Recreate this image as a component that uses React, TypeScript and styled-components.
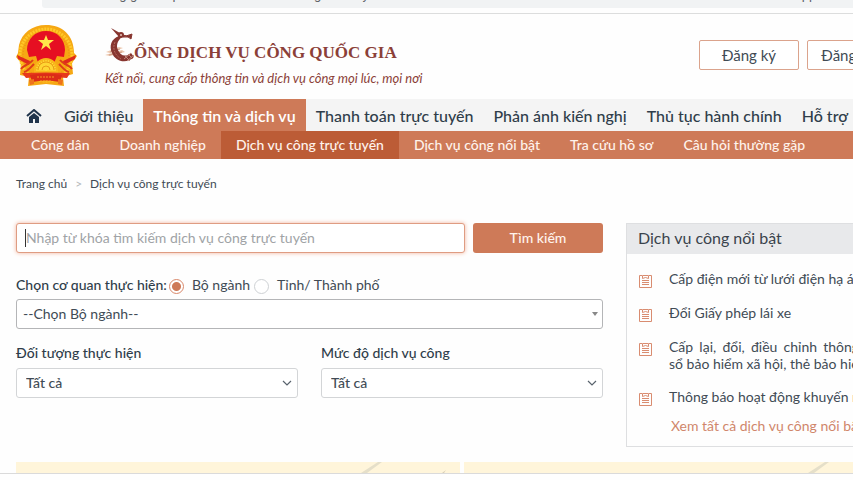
import React, { useState } from 'react';
import styled, { createGlobalStyle, css } from 'styled-components';

const GlobalStyle = createGlobalStyle`
  *, *::before, *::after { box-sizing: border-box; }
  body {
    margin: 0;
    background: #fefefe;
    color: #414b55;
    font-family: Lato, "Noto Sans", sans-serif;
    font-size: 14px;
    line-height: 18px;
  }
  button, input, select { font: inherit; color: inherit; }
  a { color: inherit; text-decoration: none; }
`;

const accent = '#ce7a58';

const Page = styled.div`
  overflow: hidden;
`;

const AddressStrip = styled.div`
  display: flex;
  height: 14px;
  padding: 0 0 5px 42px;
  border-bottom: 1px solid #dcdddd;
`;

const AddressBar = styled.div`
  display: flex;
  flex: 1;
  align-items: flex-end;
  justify-content: space-between;
  height: 8px;
  padding: 0 8px 6px 18px;
  overflow: hidden;
  background: #f1f3f4;
  border-radius: 0 0 0 3px;
  color: #5f6368;
  font-family: Roboto, sans-serif;
  font-size: 13px;
  line-height: 15px;
  white-space: nowrap;
`;

const Container = styled.div`
  min-width: 923px;
  padding: 0 16px;
`;

const Header = styled(Container)`
  display: flex;
  align-items: flex-start;
  height: 85px;
  padding-top: 11px;
`;

const Brand = styled.div`
  flex: 1;
  margin-left: 27px;
  color: #8b3f38;
`;

const BrandTitle = styled.h1`
  display: flex;
  align-items: flex-end;
  height: 40px;
  margin: 0;
  font-family: "Liberation Serif", serif;
  font-size: 17px;
  font-weight: 700;
  line-height: 24px;
  white-space: nowrap;
`;

const Slogan = styled.p`
  margin: 4px 0 0;
  font-size: 13px;
  font-style: italic;
`;

const HeaderActions = styled.div`
  display: flex;
  gap: 8px;
  margin-top: 15px;
`;

const OutlineButton = styled.button`
  width: 100px;
  height: 30px;
  padding: 0;
  background: #fff;
  border: 1px solid #dba38c;
  border-radius: 2px;
  font-size: 15px;
`;

const MainNav = styled.nav`
  background: #f4f4f4;
`;

const MainNavRow = styled(Container)`
  display: flex;
  height: 32px;
  white-space: nowrap;
`;

const navItem = css`
  display: flex;
  align-items: center;
  padding: 2px 10px 0;
`;

const NavLink = styled.a<{ $active?: boolean }>`
  ${navItem}
  color: ${p => (p.$active ? '#fff' : '#2f3d4a')};
  background: ${p => (p.$active ? accent : 'transparent')};
  font-size: 16px;
  font-weight: ${p => (p.$active ? 600 : 500)};
`;

const HomeLink = styled.a`
  ${navItem}
  margin-right: 2px;
`;

const SubNav = styled.nav`
  background: ${accent};
`;

const SubNavRow = styled(Container)`
  display: flex;
  height: 28px;
  white-space: nowrap;
`;

const SubLink = styled.a<{ $active?: boolean }>`
  display: flex;
  align-items: center;
  padding: 0 15px;
  color: #fff3ec;
  background: ${p => (p.$active ? '#bc5c36' : 'transparent')};
  font-weight: 500;
`;

const Breadcrumb = styled.nav`
  display: flex;
  gap: 8px;
  height: 64px;
  padding: 16px 16px 0;
  font-size: 12px;
`;

const Separator = styled.span`
  color: #b5b8bb;
`;

const Content = styled(Container)`
  display: grid;
  grid-template-columns: minmax(0, 1fr) 300px;
  column-gap: 23px;
  align-items: start;
  min-width: 942px;
`;

const SearchForm = styled.form`
  display: flex;
  flex-direction: column;
`;

const SearchRow = styled.div`
  display: flex;
  gap: 8px;
`;

const SearchField = styled.div`
  position: relative;
  flex: 1;
  &::before {
    content: '';
    position: absolute;
    left: 9px;
    top: 6px;
    width: 1px;
    height: 18px;
    background: #333;
  }
`;

const SearchInput = styled.input`
  display: block;
  width: 100%;
  height: 30px;
  padding: 0 9px 2px;
  background: #fff;
  border: 1px solid #df9c82;
  border-radius: 3px;
  box-shadow: 0 0 4px #f3b59d;
  outline: none;
  &::placeholder { color: #a0a3a6; opacity: 1; }
`;

const SearchButton = styled.button`
  width: 130px;
  height: 30px;
  padding: 0;
  background: ${accent};
  border: 0;
  border-radius: 3px;
  color: #fff3ec;
  font-weight: 500;
`;

const AgencyGroup = styled.fieldset`
  display: flex;
  align-items: center;
  height: 18px;
  margin: 23px 0 5px;
  padding: 0;
  border: 0;
`;

const GroupLabel = styled.span`
  margin-right: 2px;
  font-weight: 500;
  color: #2f3d4a;
`;

const RadioLabel = styled.label`
  display: flex;
  align-items: center;
  gap: 8px;
  margin-right: 4px;
`;

const Radio = styled.input`
  appearance: none;
  width: 15px;
  height: 15px;
  margin: 2px 0 0;
  background: #fff;
  border: 1px solid #ced1d4;
  border-radius: 50%;
  &:checked {
    border-color: #d9886a;
    background: radial-gradient(circle, ${accent} 0 4px, #fff 5px);
  }
`;

const SelectBox = styled.div`
  position: relative;
`;

const Select = styled.select<{ $strong?: boolean }>`
  display: block;
  appearance: none;
  width: 100%;
  height: 30px;
  padding: ${p => (p.$strong ? '0 24px 0 6px' : '0 24px 0 9px')};
  background: #fff;
  border: 1px solid ${p => (p.$strong ? '#b4b5b7' : '#d3d5d7')};
  border-radius: 3px;
  font-weight: ${p => (p.$strong ? 400 : 500)};
`;

const SelectMark = styled.svg`
  position: absolute;
  right: 4px;
  top: 10px;
  width: 14px;
  height: 10px;
  pointer-events: none;
`;

const Filters = styled.div`
  display: grid;
  grid-template-columns: 1fr 1fr;
  column-gap: 23px;
  margin-top: 15px;
`;

const FieldLabel = styled.label`
  display: block;
  margin-bottom: 6px;
  color: #2f3d4a;
  font-weight: 500;
`;

const Panel = styled.aside`
  border: 1px solid #dedfe1;
`;

const PanelTitle = styled.h2`
  margin: 0;
  padding: 5px 11px 7px;
  background: #e8e9eb;
  color: #3a434c;
  font-size: 16px;
  font-weight: 400;
`;

const ServiceList = styled.ul`
  margin: 0;
  padding: 16px 12px 0;
  list-style: none;
`;

const ServiceItem = styled.li`
  display: flex;
  align-items: flex-start;
  gap: 17px;
  margin-bottom: 16px;
  text-align: justify;
  line-height: 17px;
`;

const ServiceIcon = styled.svg`
  flex: none;
  width: 13px;
  height: 14px;
  margin-top: 4px;
`;

const MoreLink = styled.a`
  display: block;
  margin: -5px 0 11px 44px;
  color: #d0866b;
  white-space: nowrap;
`;

const Banners = styled(Container)`
  display: grid;
  grid-template-columns: 1fr 1fr;
  gap: 4px;
  margin-top: 15px;
`;

const Banner = styled.div`
  display: flex;
  justify-content: flex-end;
  height: 11px;
  background: #fff5da;
`;

const StatusBar = styled.footer`
  height: 7px;
  border-top: 1px solid #dadada;
  background: #fefefe;
`;

function wheelRays() {
  return Array.from({ length: 13 }, (_, i) => {
    const a = Math.PI + (Math.PI * i) / 12;
    return `M30 45 L${30 + 10 * Math.cos(a)} ${45 + 10 * Math.sin(a)}`;
  }).join(' ');
}

function Emblem() {
  return (
    <svg width="62" height="62" viewBox="0 0 62 62" role="img" aria-label="Quốc huy Việt Nam">
      <path d="M30 0C16 0 6 8 3 20L2 28 0 32 5 38 4 50 13 52 12 61 30 59 48 61 47 52 57 49 56 38 61 31 58 28C58 10 46 0 30 0Z" fill="#f6a813" />
      <circle cx="30" cy="30" r="26" fill="none" stroke="#ffc928" strokeWidth="3" strokeDasharray="2 1" />
      <circle cx="30" cy="30" r="23" fill="none" stroke="#e98a12" strokeWidth="1" strokeDasharray="1 2" />
      <path d="M30 6C19 6 11 14 11 25L13 32 20 31 22 38 38 38 41 31 48 32 49 25C49 14 41 6 30 6Z" fill="#e60f22" />
      <path d="M30 10l2 5h6l-5 4 2 6-5-4-5 4 2-6-5-4h6z" fill="#ffe94a" />
      <path d="M1 30l13 6-1 4L2 34zM60 30l-13 6 1 4 11-6z" fill="#e02a1d" />
      <path d="M5 44c4-5 8-4 12-9M8 47c4-1 7-5 10-8M56 44c-4-5-8-4-12-9M53 47c-4-1-7-5-10-8" fill="none" stroke="#de3c18" strokeWidth="2" />
      <path d="M18 45a12 12 0 0 1 24 0v5H18z" fill="#f9b51a" />
      <path d={wheelRays()} stroke="#ffdf3d" strokeWidth="1" />
      <path d="M22 45a8 8 0 0 1 16 0M26 45a4 4 0 0 1 8 0" fill="#ffd633" stroke="#e99b16" strokeWidth="1" />
      <path d="M6 48Q30 47 54 48L51 53Q30 51 10 53Z" fill="#e7391b" />
      <path d="M14 50Q30 47 46 50L44 57Q30 54 16 57Z" fill="#dc2b18" />
      <path d="M21 52h18M24 56h12" stroke="#f79b20" strokeWidth="1" strokeDasharray="2 1" />
      <path d="M13 55l5-1v5l-4 1zM47 55l-5-1v5l4 1z" fill="#ee721b" />
    </svg>
  );
}

function BirdMark() {
  return (
    <svg width="29" height="38" viewBox="0 0 29 38" aria-hidden="true">
      <path d="M1 25l13-5 4 1-13 5zM0 28l17-5 3 2-15 4z" fill="#ecc7ae" />
      <path d="M5 25l10-3M4 28l13-3" stroke="#cf9a82" fill="none" />
      <path d="M6 1l9 5 3 3-4 1z" fill="#87352f" />
      <path d="M16 8q6 2 11-1l-1 5q-2-3-8-2" fill="#87352f" stroke="#87352f" />
      <path d="M14 9C6 12 4 19 7 26c3 8 14 12 22 4l-3-4c-6 5-11 2-13-3-2-4-1-9 4-13z" fill="#87352f" />
      <path d="M10 15c-3 7 0 13 6 17" fill="none" stroke="#b5685c" strokeDasharray="2 1" />
      <circle cx="16" cy="8" r="3" fill="#87352f" />
      <circle cx="16" cy="8" r="1" fill="#e7c6bd" />
      <path d="M19 32l7-6M22 34l7-6M20 29l5 5M23 27l5 5" stroke="#c0877b" />
    </svg>
  );
}

function HomeIcon() {
  return (
    <svg width="16" height="14" viewBox="0 0 16 14" role="img" aria-label="Trang chủ">
      <path d="M1 7l7-6 7 6" fill="none" stroke="#20344b" strokeWidth="2" />
      <path d="M3 8l5-4 5 4v6H9v-4H7v4H3z" fill="#20344b" />
    </svg>
  );
}

function ClipboardIcon() {
  return (
    <ServiceIcon viewBox="0 0 13 14" fill="none" stroke="#d98c70" aria-hidden="true">
      <path d="M3 1.500H.5v12h12v-12H10" />
      <path d="M3.500 4.500v-3h6v3l-3-1z" />
      <path d="M3 6.500h7M3 8.500h7M3 10.500h7" />
    </ServiceIcon>
  );
}

function Chevron() {
  return (
    <SelectMark viewBox="0 0 14 10" aria-hidden="true">
      <path d="M3 3l4 4 4-4" fill="none" stroke="#59636d" strokeWidth="1.200" />
    </SelectMark>
  );
}

function BannerStroke() {
  return (
    <svg width="100" height="11" viewBox="0 0 100 11" aria-hidden="true">
      <path d="M1 11L18 0h4L7 11z" fill="#e5dfc9" />
      <path d="M82 11l4-3-2 3z" fill="#d8cfb9" />
    </svg>
  );
}

const menu = ['Giới thiệu', 'Thông tin và dịch vụ', 'Thanh toán trực tuyến', 'Phản ánh kiến nghị', 'Thủ tục hành chính', 'Hỗ trợ'];
const submenu = ['Công dân', 'Doanh nghiệp', 'Dịch vụ công trực tuyến', 'Dịch vụ công nổi bật', 'Tra cứu hồ sơ', 'Câu hỏi thường gặp'];
const services = [
  'Cấp điện mới từ lưới điện hạ áp',
  'Đổi Giấy phép lái xe',
  'Cấp lại, đổi, điều chỉnh thông tin trên sổ\u00a0bảo hiểm xã hội, thẻ bảo hiểm y tế',
  'Thông báo hoạt động khuyến mại',
];

export default function App() {
  const [agency, setAgency] = useState('ministry');
  return (
    <Page>
      <GlobalStyle />
      <AddressStrip>
        <AddressBar>
          <span>dichvucong.gov.vn/p/home/dvc-dich-vu-cong-truc-tuyen.html</span>
          <span>Apps bar</span>
        </AddressBar>
      </AddressStrip>
      <Header as="header">
        <Emblem />
        <Brand>
          <BrandTitle aria-label="Cổng Dịch vụ công Quốc gia">
            <BirdMark />
            ỔNG DỊCH VỤ CÔNG QUỐC GIA
          </BrandTitle>
          <Slogan>Kết nối, cung cấp thông tin và dịch vụ công mọi lúc, mọi nơi</Slogan>
        </Brand>
        <HeaderActions>
          <OutlineButton type="button">Đăng ký</OutlineButton>
          <OutlineButton type="button">Đăng nhập</OutlineButton>
        </HeaderActions>
      </Header>
      <MainNav>
        <MainNavRow>
          <HomeLink href="#home"><HomeIcon /></HomeLink>
          {menu.map((label, i) => (
            <NavLink key={label} href={`#menu-${i}`} $active={i === 1}>{label}</NavLink>
          ))}
        </MainNavRow>
      </MainNav>
      <SubNav>
        <SubNavRow>
          {submenu.map((label, i) => (
            <SubLink key={label} href={`#sub-${i}`} $active={i === 2}>{label}</SubLink>
          ))}
        </SubNavRow>
      </SubNav>
      <Breadcrumb aria-label="Đường dẫn">
        <a href="#home">Trang chủ</a>
        <Separator>&gt;</Separator>
        <span>Dịch vụ công trực tuyến</span>
      </Breadcrumb>
      <Content as="main">
        <SearchForm onSubmit={e => e.preventDefault()}>
          <SearchRow>
            <SearchField>
              <SearchInput type="text" aria-label="Từ khóa" placeholder="Nhập từ khóa tìm kiếm dịch vụ công trực tuyến" />
            </SearchField>
            <SearchButton type="submit">Tìm kiếm</SearchButton>
          </SearchRow>
          <AgencyGroup aria-label="Chọn cơ quan thực hiện">
            <GroupLabel>Chọn cơ quan thực hiện:</GroupLabel>
            <RadioLabel>
              <Radio type="radio" name="agency" checked={agency === 'ministry'} onChange={() => setAgency('ministry')} />
              Bộ ngành
            </RadioLabel>
            <RadioLabel>
              <Radio type="radio" name="agency" checked={agency === 'province'} onChange={() => setAgency('province')} />
              Tỉnh/ Thành phố
            </RadioLabel>
          </AgencyGroup>
          <SelectBox>
            <Select $strong aria-label="Chọn Bộ ngành">
              <option>--Chọn Bộ ngành--</option>
            </Select>
            <SelectMark viewBox="0 0 14 10" aria-hidden="true">
              <path d="M7 3h6l-3 4z" fill="#888" />
            </SelectMark>
          </SelectBox>
          <Filters>
            <div>
              <FieldLabel htmlFor="audience">Đối tượng thực hiện</FieldLabel>
              <SelectBox>
                <Select id="audience"><option>Tất cả</option></Select>
                <Chevron />
              </SelectBox>
            </div>
            <div>
              <FieldLabel htmlFor="level">Mức độ dịch vụ công</FieldLabel>
              <SelectBox>
                <Select id="level"><option>Tất cả</option></Select>
                <Chevron />
              </SelectBox>
            </div>
          </Filters>
        </SearchForm>
        <Panel>
          <PanelTitle>Dịch vụ công nổi bật</PanelTitle>
          <ServiceList>
            {services.map(name => (
              <ServiceItem key={name}>
                <ClipboardIcon />
                <a href="#service">{name}</a>
              </ServiceItem>
            ))}
          </ServiceList>
          <MoreLink href="#all">Xem tất cả dịch vụ công nổi bật</MoreLink>
        </Panel>
      </Content>
      <Banners>
        <Banner><BannerStroke /></Banner>
        <Banner><BannerStroke /></Banner>
      </Banners>
      <StatusBar />
    </Page>
  );
}
